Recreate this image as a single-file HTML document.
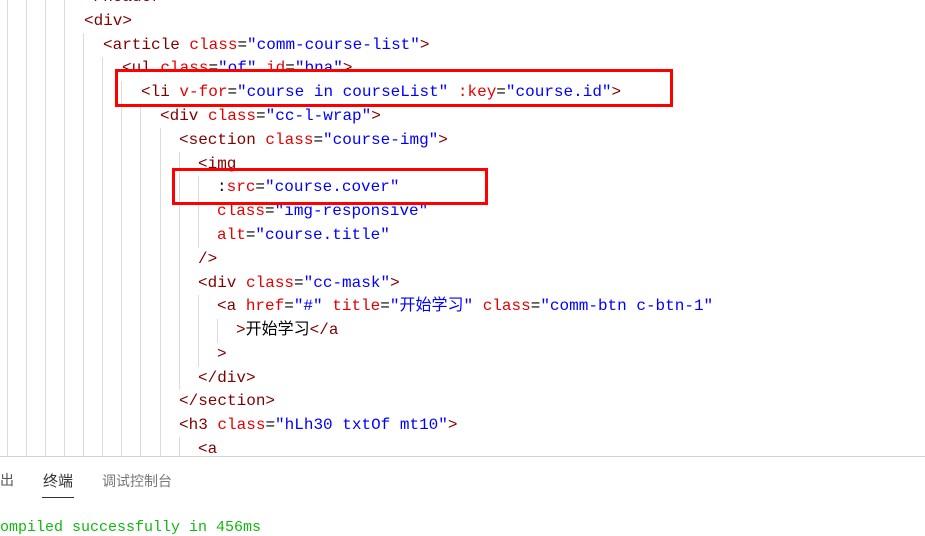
<!DOCTYPE html>
<html><head><meta charset="utf-8"><style>
body{margin:0;width:925px;height:535px;overflow:hidden;background:#fff;position:relative;font-family:"Liberation Mono","Noto Sans CJK SC",monospace;}
.l{position:absolute;left:0;height:24px;line-height:24px;font-size:16px;white-space:pre;color:#000}
.t{color:#800000}.a{color:#e50000}.v{color:#0000ff}
.g{position:absolute;width:1px;background:#dcdcdc}
.box{position:absolute;border:3px solid #f00;box-sizing:border-box}
</style></head><body>
<div class="g" style="left:7px;top:0;height:456px"></div>
<div class="g" style="left:26px;top:0;height:456px"></div>
<div class="g" style="left:45px;top:0;height:456px"></div>
<div class="g" style="left:64px;top:0;height:456px"></div>
<div class="g" style="left:83px;top:33px;height:423px"></div>
<div class="g" style="left:102px;top:57px;height:399px"></div>
<div class="g" style="left:121px;top:81px;height:375px"></div>
<div class="g" style="left:140px;top:105px;height:351px"></div>
<div class="g" style="left:160px;top:128px;height:328px"></div>
<div class="g" style="left:179px;top:152px;height:238px"></div>
<div class="g" style="left:198px;top:176px;height:72px"></div>
<div class="g" style="left:198px;top:295px;height:72px"></div>
<div class="g" style="left:217px;top:319px;height:24px"></div>
<div class="g" style="left:179px;top:437px;height:19px"></div>

<div class="l" style="top:-15px;left:84px"><span class="t">&lt;/header&gt;</span></div>
<div class="l" style="top:9px;left:84px"><span class="t">&lt;div&gt;</span></div>
<div class="l" style="top:33px;left:103px"><span class="t">&lt;article</span> <span class="a">class</span>=<span class="v">"comm-course-list"</span><span class="t">&gt;</span></div>
<div class="l" style="top:56px;left:122px"><span class="t">&lt;ul</span> <span class="a">class</span>=<span class="v">"of"</span> <span class="a">id</span>=<span class="v">"bna"</span><span class="t">&gt;</span></div>
<div class="l" style="top:80px;left:141px"><span class="t">&lt;li</span> <span class="a">v-for</span>=<span class="v">"course in courseList"</span> <span class="a">:key</span>=<span class="v">"course.id"</span><span class="t">&gt;</span></div>
<div class="l" style="top:104px;left:160px"><span class="t">&lt;div</span> <span class="a">class</span>=<span class="v">"cc-l-wrap"</span><span class="t">&gt;</span></div>
<div class="l" style="top:128px;left:179px"><span class="t">&lt;section</span> <span class="a">class</span>=<span class="v">"course-img"</span><span class="t">&gt;</span></div>
<div class="l" style="top:152px;left:198px"><span class="t">&lt;img</span></div>
<div class="l" style="top:175px;left:217px">:<span class="a">src</span>=<span class="v">"course.cover"</span></div>
<div class="l" style="top:199px;left:217px"><span class="a">class</span>=<span class="v">"img-responsive"</span></div>
<div class="l" style="top:223px;left:217px"><span class="a">alt</span>=<span class="v">"course.title"</span></div>
<div class="l" style="top:247px;left:198px"><span class="t">/&gt;</span></div>
<div class="l" style="top:271px;left:198px"><span class="t">&lt;div</span> <span class="a">class</span>=<span class="v">"cc-mask"</span><span class="t">&gt;</span></div>
<div class="l" style="top:294px;left:217px"><span class="t">&lt;a</span> <span class="a">href</span>=<span class="v">"#"</span> <span class="a">title</span>=<span class="v">"开始学习"</span> <span class="a">class</span>=<span class="v">"comm-btn c-btn-1"</span></div>
<div class="l" style="top:318px;left:236px"><span class="t">&gt;</span>开始学习<span class="t">&lt;/a</span></div>
<div class="l" style="top:342px;left:217px"><span class="t">&gt;</span></div>
<div class="l" style="top:366px;left:198px"><span class="t">&lt;/div&gt;</span></div>
<div class="l" style="top:389px;left:179px"><span class="t">&lt;/section&gt;</span></div>
<div class="l" style="top:413px;left:179px"><span class="t">&lt;h3</span> <span class="a">class</span>=<span class="v">"hLh30 txtOf mt10"</span><span class="t">&gt;</span></div>
<div class="l" style="top:437px;left:198px"><span class="t">&lt;a</span></div>

<div class="box" style="left:115px;top:69px;width:558px;height:38px"></div>
<div class="box" style="left:172px;top:168px;width:316px;height:37px"></div>

<div style="position:absolute;left:0;top:456px;width:925px;height:79px;background:#fff;border-top:1px solid #d4d4d4"></div>
<div style="position:absolute;top:470px;left:0;font:14px 'Liberation Sans','Noto Sans CJK SC',sans-serif;color:#555;white-space:nowrap">出</div>
<div style="position:absolute;top:470px;left:43px;font:15px 'Liberation Sans','Noto Sans CJK SC',sans-serif;color:#333">终端</div>
<div style="position:absolute;top:497px;left:42px;width:32px;height:1px;background:#333"></div>
<div style="position:absolute;top:471px;left:102px;font:14px 'Liberation Sans','Noto Sans CJK SC',sans-serif;color:#777">调试控制台</div>
<div style="position:absolute;top:519px;left:-9px;font:15px 'Liberation Mono',monospace;color:#11b811;white-space:pre">compiled successfully in 456ms</div>
</body></html>
